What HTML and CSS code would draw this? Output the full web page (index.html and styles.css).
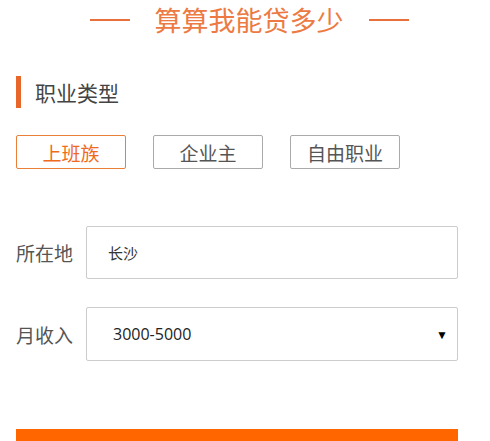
FILE: index.html
```html
<!DOCTYPE html>
<html lang="zh-CN">
<head>
    <meta charset="UTF-8">
    <meta name="viewport" content="width=device-width, initial-scale=1.0">
    <title>算算我能贷多少</title>
    <link rel="stylesheet" href="styles.css">
</head>
<body>
    <div class="container">
        <div class="title">
            <span class="line"></span>
            <h1>算算我能贷多少</h1>
            <span class="line"></span>
        </div>
        <div class="sub-title">职业类型</div>
        <div class="types">
            <button class="type active">上班族</button>
            <button class="type">企业主</button>
            <button class="type">自由职业</button>
        </div>
        <div class="form">
            <div class="row">
                <label>所在地</label>
                <input class="field" type="text" value="长沙">
            </div>
            <div class="row">
                <label>月收入</label>
                <div class="field select">
                    <span>3000-5000</span>
                    <span class="arrow">▼</span>
                </div>
            </div>
        </div>
        <button class="submit">立即测算</button>
    </div>
</body>
</html>
```

FILE: styles.css
```css
body {
    margin: 0;
    padding: 0;
    font-family: "Noto Sans CJK SC", "Noto Sans", sans-serif;
    color: #555;
    background: #fff;
}
.container {
    padding: 0 32px 0 16px;
}
.title {
    display: flex;
    justify-content: center;
    align-items: center;
    gap: 25px;
    height: 40px;
    padding-left: 24px;
}
.title h1 {
    margin: 0;
    font-size: 27px;
    font-weight: normal;
    line-height: 40px;
    color: #ec7a42;
}
.title .line {
    width: 40px;
    height: 2px;
    background: #e8703a;
}
.sub-title {
    margin-top: 36px;
    height: 32px;
    line-height: 32px;
    border-left: 5px solid #e8662a;
    padding-left: 14px;
    font-size: 21px;
    color: #444;
}
.types {
    display: flex;
    gap: 27px;
    margin-top: 27px;
}
.type {
    width: 110px;
    height: 34px;
    padding: 0;
    border: 1px solid #aaa;
    border-radius: 2px;
    background: #fff;
    font-family: inherit;
    font-size: 19px;
    color: #555;
}
.type.active {
    border-color: #e8803a;
    color: #f06a1e;
}
.form {
    margin-top: 57px;
    display: flex;
    flex-direction: column;
    gap: 28px;
}
.row {
    display: flex;
    align-items: center;
}
.row label {
    width: 70px;
    font-size: 19px;
    color: #555;
}
.field {
    box-sizing: border-box;
    flex: 1;
    height: 53px;
    border: 1px solid #ccc;
    border-radius: 2px;
    background: #fff;
    padding: 0 0 0 21px;
    font-family: inherit;
    font-size: 15px;
    color: #333;
    outline: none;
}
.select {
    display: flex;
    align-items: center;
    justify-content: space-between;
    height: 54px;
    padding: 0 9px 0 26px;
    font-family: "Open Sans", sans-serif;
    font-size: 16px;
    color: #222;
}
.arrow {
    font-size: 12px;
    color: #000;
}
.submit {
    display: block;
    width: 442px;
    height: 64px;
    margin-top: 68px;
    padding: 0;
    border: none;
    background: #ff6600;
    color: #fff;
    font-family: inherit;
    font-size: 20px;
    line-height: 64px;
}
```
